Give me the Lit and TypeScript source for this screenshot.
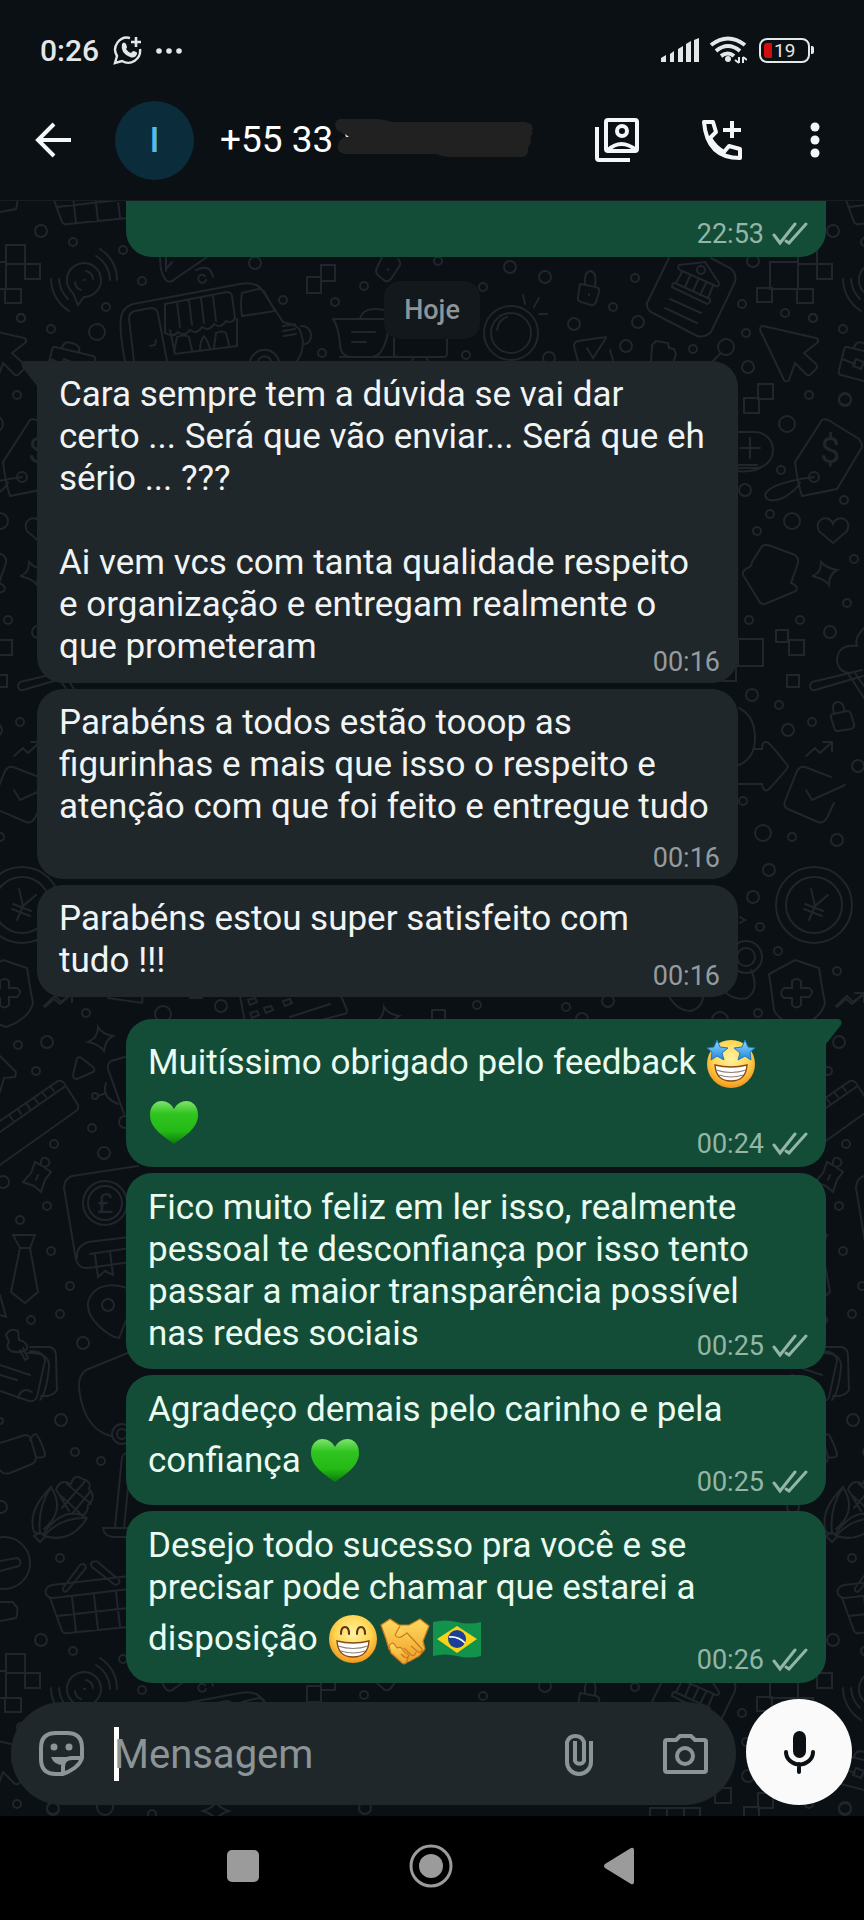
// Chat screen: phone status bar, conversation header,
// message list over a doodle wallpaper, composer and
// the system navigation keys.

import { html, svg, css, LitElement } from "lit";
import { customElement, property } from "lit/decorators.js";
import { classMap } from "lit/directives/class-map.js";

// The doodles repeat on this tile.
const TILE_WIDTH = 792;
const TILE_HEIGHT = 1409;

// [x, y, radius]
const BUBBLES = [
  [142, 281, 5], [106, 307, 5], [21, 318, 5], [51, 329, 5], [97, 332, 9],
  [255, 263, 7], [364, 286, 5], [335, 302, 5], [283, 300, 5], [322, 353, 5],
  [438, 261, 5], [483, 287, 5], [510, 267, 7], [545, 277, 7], [635, 278, 5],
  [613, 307, 5], [574, 324, 7], [638, 322, 7], [626, 346, 7], [693, 349, 5],
  [726, 347, 9], [746, 333, 5], [742, 304, 5], [785, 313, 5], [813, 318, 5],
  [753, 261, 7], [748, 367, 7], [466, 355, 5], [549, 358, 7], [787, 424, 9],
  [781, 470, 5], [745, 490, 7], [770, 514, 5], [757, 531, 5], [792, 521, 9],
  [844, 500, 5], [854, 559, 5], [847, 603, 5], [845, 399, 7], [809, 395, 5],
  [749, 620, 5], [800, 620, 5], [830, 632, 7], [752, 695, 7], [779, 705, 5],
  [788, 730, 7], [812, 722, 5], [858, 766, 7], [743, 801, 5], [763, 833, 9],
  [792, 837, 5], [837, 840, 7], [769, 870, 7], [753, 897, 7], [760, 927, 5],
  [778, 951, 5], [837, 971, 5], [758, 1013, 5], [720, 1020, 9],
  [86, 1013, 5], [163, 1014, 9], [221, 1006, 7], [18, 1045, 5], [47, 1042, 7],
  [36, 1071, 5], [92, 1128, 5], [54, 1144, 5], [104, 1153, 7], [3, 1182, 7],
  [47, 1206, 5], [20, 1220, 5], [51, 1251, 5], [70, 1286, 5], [60, 1314, 5],
  [31, 1320, 5], [83, 1343, 7], [95, 1096, 4], [125, 1122, 7], [477, 1005, 5],
  [566, 1007, 5], [608, 1001, 7], [582, 1019, 7], [61, 1420, 7], [75, 1452, 5],
  [101, 1461, 5], [0, 1421, 4], [1, 1507, 7], [60, 1558, 5], [41, 1640, 7],
  [73, 1651, 5], [123, 1659, 5], [53, 1809, 7], [105, 1807, 9], [152, 1814, 5],
  [365, 1808, 7],
];

const DOODLES = [
  // stacked squares
  "M798 245h19v19h-19zM770 262h28v27h-28zM817 264h15v15h-15zM757 288h15v14h-15zM797 289h16v14h-16z",
  "M321 265h14v16h-14zM307 277h14v16h-14zM758 384h15v15h-15zM744 398h15v15h-15z",
  "M738 639h25v27h-25zM776 630h12v12h-12zM789 640h15v15h-15zM787 675h12v12h-12zM722 666h14v15h-14z",
  "M432 1010h13v13h-13zM190 985h12v13h-12zM650 1808h50v30h-50zM667 1808v20M684 1808v20M715 1788h16v15h-16z",
  // speaker with sound waves
  "M78 305l-5-12a17 17 0 1 1 11 4zM84 280h1M86 271a9 9 0 0 1 7 8M75 282a9 9 0 0 0 6 8",
  "M96 256a28 28 0 0 1 14 24M100 249a36 36 0 0 1 17 31M59 279a30 30 0 0 0 9 20M51 279a38 38 0 0 0 18 32",
  // music note and cone
  "M160 257q0 18 7 24q4 2 8-2l32-22M166 257v14M172 262l-5 6M196 270q14-7 17 7M206 280a4 4 0 1 1-1-4",
  // food truck
  "M125 361q-6-30-4-44q2-10 12-13l107-20q16-3 22 6l21 32q14 3 17 8l3 11q0 12-6 20M134 361l-5-42q0-7 6-8l16-3q6 0 7 6l9 47",
  "M165 304l62-12q4 0 5 4l3 22q-3 6-9 3q-5 8-12 3q-5 8-12 3q-5 8-12 3q-5 7-12 2q-5 6-13 1zM177 302l3 25M189 300l3 25M201 298l3 25M213 296l3 25M170 330l5 24l62-8v-27",
  "M242 293l16-4q5 0 7 4l10 18l-33 5q-2-12 0-23M283 326l12-2M283 331l12-2M284 336l12-2M301 326q9 0 10 9q0 8-6 9M250 361a15 15 0 0 1 29 0M258 361a7 7 0 0 1 13 0M150 346l5-1l1-5",
  "M174 352l3-15q7-3 12 0l3 13M200 350q0-9 4-14q4 5 6 13M214 347l2-14q6-3 10 0l3 12",
  // jug and monitor
  "M333 319h56q0 22-9 34q-4 4-10 4h-18q-12 0-12-14q-2-18-7-24M352 332h23M352 342h14M360 318q4-12 24-8M394 322v33q1 2 4 2h46q3 0 3-4v-25M340 357h104M414 357l-4 8M426 357l4 8",
  // tag, padlocks
  "M382 257l-6 13q0 4 3 6l6 5q3 1 6-2l9-14q1-4-2-6M388 269v1M580 284l16 3q4 1 3 5l-3 10q-2 4-5 3l-10-3q-4-1-3-5zM585 284q-1-13 6-13q6 2 4 14M589 294v1",
  "M833 714l14-3q3 0 4 3l3 10q1 4-3 5l-13 2q-4 0-4-4l-3-9q-1-3 2-4zM834 713q-3-11 4-11q6 0 6 9",
  // mirror ring
  "M484 333a27 27 0 1 0 54 0a27 27 0 1 0-54 0zM491 333a20 20 0 1 0 40 0a20 20 0 1 0-40 0M497 330q2-11 10-13M534 307l5-9M525 304l-2-9M539 314h8",
  // check cards
  "M606 337l-28 4q-4 1-4 5l4 15M606 338l-13 20l-6-10M610 350l3 10M652 345l4-4l12 2l1 5l5 1l2 5l-3 9h-22zM720 354l-8 8",
  "M831 777l-26-10q-5-1-8 4l-12 30q-2 6 3 8l30 13q5 2 9-4l7-15M806 790l6 10l33-15",
  // bank letter
  "M669 258l-22 45q-1 7 6 10l44 23q8 2 14-4l24-50q2-9-5-14l-19-10M679 265l26-3l14 21q0 4-3 3l-36-16q-3-2-1-5zM675 283q-3 0-3 4l35 17q4-1 3-5zM682 272l-6 11M690 276l-5 11M698 280l-5 11M706 283l-6 12M713 286l-5 12M697 270a4 4 0 1 0 8 0a4 4 0 1 0-8 0M670 299l31 14M665 308l32 15",
  // pointer
  "M763 326l53 12q4 2 1 5l-13 10l12 11q2 3 0 5l-6 6q-2 1-4-1l-11-11l-6 17q-3 3-5 0l-24-50q0-4 3-4z",
  // briefcase
  "M847 347l38 9q3 1 2 5l-6 21q-1 3-5 2l-35-9q-3-1-2-5l5-20q1-4 3-3zM842 359l13 5M866 366l16 4M856 359l8 3l-3 7l-8-3zM854 348q2-8 10-5q9 2 7 9",
  // pills, price tag
  "M735 432h20a18 18 0 0 1 0 36h-20M735 465h22M735 471q20 2 28-5M750 438v20M740 448h20",
  "M822 420q4-2 8 1l29 18q3 3 3 8l-25 42l-35 7q-5-15-7-34zM809 477a5 5 0 1 0 10 0a5 5 0 1 0-10 0M814 477q-45 6-49 18q2 9 18 3q14-8 17-16",
  // heart, house, sparkles
  "M833 543l-14-12c-6-12 10-18 14-7c4-11 20-5 14 7zM762 546q4-2 9 0l24 9q4 3 3 8l-7 20q8 3 5 8l-31 13q-4 1-6-3l-16-26q-1-5 5-7q4-2 4-6z",
  "M821 562q5 6 16 8q-8 4-8 15q-4-6-17-9q9-2 9-14zM98 1027q4 7 15 9q-8 4-9 15q-5-7-16-9q10-4 10-15zM384 1007q4 7 15 9q-8 4-9 15q-5-7-16-9q10-4 10-15zM216 1802q3 6 13 9q-10 3-13 9q-3-6-13-9q10-3 13-9z",
  // balloon, pen, arrows
  "M864 628q-10 10-7 18q-20-2-20 15q2 12 14 12M812 682l50-12M815 690l48-14M812 682q-4 4 0 8h3M849 675l17 26M855 673l18 26",
  "M806 756l9-8l5 5l12-11M823 742h9v9M837 1007l9-8l6 5l12-10M855 993h9v9M739 708q16 8 16 30q0 20-16 27M755 749h7q0-8 5-7q3 1 21 24q0 3-20 24q-5 2-6-6h-23",
  // coin
  "M776 905a38 38 0 1 0 76 0a38 38 0 1 0-76 0zM786 905a28 28 0 1 0 56 0a28 28 0 1 0-56 0zM811 889l4 17l13-11M815 906l-6 14M805 904l18 7M804 909l18 7",
  // shield
  "M795 960l24 8q3 20 6 35q-4 16-27 24q-20-7-24-17q-2-16-5-36zM792 981q5-4 9 0v7h8q6 4 0 9h-8v8q-5 5-9 0v-7h-8q-6-5 0-10h8z",
  "M730 957a16 16 0 1 0 32 0a16 16 0 1 0-32 0M737 957a9 9 0 1 0 18 0a9 9 0 1 0-18 0M751 970q9 20-4 28q-12 3-22-6M740 917l5 3l-5 3M669 996q8 15 22 15q12-4 12-15",
  // keyboard and cards
  "M240 996l5 26M341 996l6 14q0 4-3 4l-84 22M248 1000l7-2l2 4l-7 3zM264 1008l7-2l2 4l-7 3zM283 1001l7-2l2 4l-7 3zM250 1013l7-2l2 4l-7 3zM290 1017l40-13M108 998l34 5q1-4 0-8M44 1006l11-10l6 6l10-8",
  // play button, robot
  "M77 1058q3-2 6 1l10 8q3 3 0 5l-16 7q-4 0-4-4zM125 1057l-14 4q-4 3-3 8l16 45M98 1096l8-3M106 1083q-5 14 12 21",
  // ruler
  "M0 1121l58-40q4-1 6 2l14 22q1 4-2 6L0 1165M0 1132l64-45M50 1086l4 5M42 1092l4 5M34 1098l4 5M26 1103l4 6M18 1109l3 5M9 1115l4 5M0 1056l16 16l-1 5l-11 1l-4 14",
  // thumb tack
  "M35 1162l6 3l10 7l-6 8l-4 12l-7-6l-11-4l8-9zM41 1163q0-8 7-4q4 6-3 8M38 1175l-2 5",
  // book
  "M138 1166l-66 10q-8 3-8 12l12 72q3 9 12 8l50-7M138 1236l-50 6q-12 4-11 16M83 1203a22 22 0 1 0 44 0a22 22 0 1 0-44 0M88 1203a17 17 0 1 0 34 0a17 17 0 1 0-34 0M90 1254l40-6M95 1255l3 22l7-6l8 4l-3-23",
  // tie, map pin, notes
  "M13 1235h22l-5 13h-10zM20 1248l-9 44l14 11l13-11l-8-44M134 1294c-8-12-42-14-46 9c-2 17 22 34 31 35l8-20M102 1305a6 6 0 1 0 12 0a6 6 0 1 0-12 0M0 1295l6 22l-6-2",
  "M6 1335q4-8 12-4l1 9q9 2 8 9q-6 5-16 2q-6-4-2-9zM20 1350l5 10l3-2l-5-10M30 1347h20q6 2 6 9l1 34q-4 7-16 6M30 1351q14 0 15 10l-8 36q-2 5-8 4l-29-10M18 1398q4-12 14-6M0 1365l30 10M0 1375l17 5M28 1353q22-1 21 14q-2 24-9 33",
  // stroller
  "M140 1348l-54 22q-8 6-7 18q4 36 26 46l6 2M112 1434a10 10 0 1 0 20 0a10 10 0 1 0-20 0M117 1434a5 5 0 1 0 10 0a5 5 0 1 0-10 0",
  // video camera
  "M0 1443l25-8q5 0 6 5l5 17q0 5-4 7l-22 9q-7 2-10-3M30 1440q4-8 7-5q5 8 8 19q0 5-9 3",
  // corn
  "M51 1487q-24 24-17 45l5 2M51 1487q-14 22-11 46M51 1487q15 24-7 42M87 1518q-22-14-43 15M87 1518q-16 26-43 18M87 1518q-26-1-42 17M40 1532l5 5l-5 5l-6-6zM56 1490q4-12 15-6q3-11 12-5q9 3 6 10q8 8-1 16q0 8-6 11M60 1495l24 22M67 1484l24 20M62 1508l24-28M72 1514l18-22M57 1491l12 20",
  // broom
  "M138 1528h-35q1 8 10 9h25M115 1527l7-70q3-6 8-2M124 1528l6-60",
  // no-entry, basket, folder
  "M-22 1563a26 26 0 1 0 52 0a26 26 0 1 0-52 0M0 1561l17-3q6 3 2 8l-19 5M0 1602l13 0q2 4 4 5q1 6-1 11l-16 3",
  "M138 1575l-86 10q-8 2-6 9q2 4 7 4l85-10M50 1598l12 33q2 3 6 2l70-7M72 1597l4 35M94 1595l4 35M116 1592l4 35M57 1616l80-9M63 1588l17-23q5-3 6 3l-19 23q-5 2-4-3zM92 1562q5-2 7 1l20 17q2 4-4 5l-23-18q-2-3 0-5",
];

// Doodle drawings laid out in a repeating grid behind the messages.
const wallpaper = svg`
  <svg class="wallpaper" aria-hidden="true">
    <defs>
      <g id="doodles">
        ${DOODLES.map((d) => svg`<path d=${d} />`)}
        ${BUBBLES.map(([x, y, r]) => svg`<circle cx=${x} cy=${y} r=${r - 1} />`)}
        <text x="820" y="463">$</text>
        <text class="small" x="97" y="1213">£</text>
      </g>
    </defs>
    <g transform="translate(0 -201)">
      ${[-1, 0, 1, 2].map((column) =>
        [-1, 0, 1].map(
          (row) =>
            svg`<use href="#doodles" x=${column * TILE_WIDTH} y=${row * TILE_HEIGHT} />`,
        ),
      )}
    </g>
  </svg>
`;

const ticks = html`
  <svg class="ticks" viewBox="0 0 36 24" role="img" aria-label="Entregue">
    <path d="M2 13l6 8L23 2M14 19l3 2L34 2" />
  </svg>
`;

const faceGradient = svg`
  <radialGradient id="face" cx="50%" cy="38%" r="62%">
    <stop offset="0" stop-color="#fff3a0" />
    <stop offset=".6" stop-color="#ffd552" />
    <stop offset="1" stop-color="#f2951c" />
  </radialGradient>
`;

const grin = svg`
  <path d="M10 32q16 4 32 0q-1 16-16 16T10 32z" fill="#fff" stroke="#8a4a12" stroke-width="1.4" />
  <path d="M11 37q15 5 30 0M14 42q12 4 24 0" fill="none" stroke="#8b7f76" stroke-width="1.2" />
`;

// The emoji templates start and end on their tag so that
// no space is rendered between neighbours.
const starEyes = html`<svg class="emoji" viewBox="0 0 52 60" role="img" aria-label="🤩">
    <defs>
      ${faceGradient}
      <linearGradient id="star" x2="0" y2="1">
        <stop offset="0" stop-color="#8fdcff" />
        <stop offset="1" stop-color="#1f86e0" />
      </linearGradient>
    </defs>
    <circle cx="26" cy="31" r="24" fill="url(#face)" />
    ${grin}
    <g fill="url(#star)" stroke="#2374bd" stroke-width="1" stroke-linejoin="round">
      <path d="M12 7l3 7l8 1l-6 5l2 7l-7-4l-6 4l1-8l-5-4l7-1z" />
      <path d="M40 7l-3 7l-8 1l6 5l-2 7l7-4l6 4l-1-8l5-4l-7-1z" />
    </g>
  </svg>`;

const greenHeart = html`<svg class="emoji" viewBox="0 0 52 60" role="img" aria-label="💚">
    <defs>
      <linearGradient id="leaf" x2="0" y2="1">
        <stop offset="0" stop-color="#7fe36c" />
        <stop offset=".3" stop-color="#2fc41f" />
        <stop offset=".7" stop-color="#24b915" />
        <stop offset="1" stop-color="#0b7a0c" />
      </linearGradient>
    </defs>
    <path
      fill="url(#leaf)"
      d="M26 51C17 44 2 36 2 22C2 5 20 4 26 16C32 4 50 5 50 22C50 36 35 44 26 51z"
    />
  </svg>`;

const grinning = html`<svg class="emoji" viewBox="0 0 52 60" role="img" aria-label="😁">
    <defs>${faceGradient}</defs>
    <circle cx="26" cy="30" r="24" fill="url(#face)" />
    ${grin}
    <path
      d="M14 25q0-7 4-7t4 7M30 25q0-7 4-7t4 7"
      fill="none"
      stroke="#5b3410"
      stroke-width="2"
      stroke-linecap="round"
    />
  </svg>`;

const handshake = html`<svg class="emoji" viewBox="0 0 52 60" role="img" aria-label="🤝">
    <defs>
      <linearGradient id="skin" x2="0" y2="1">
        <stop offset="0" stop-color="#ffd95e" />
        <stop offset="1" stop-color="#f0a02c" />
      </linearGradient>
    </defs>
    <g fill="url(#skin)" stroke="#c87a1c" stroke-width="1.2" stroke-linejoin="round">
      <path d="M2 16l9-6l9 6l10 0l11-6l9 7l-6 15l2 8l-6 7l-9 5l-5 2l-16-14l-3-10z" />
      <path d="M10 37q3-5 6-1l2 3q4-2 6 2l2 3q4 0 3 5l-2 5q-3 2-5-1l-10-9z" />
      <path d="M21 17l-5 9q3 5 9 0l3-2l15 16q0 4-4 3l-7-6m5 6q-1 5-5 3l-7-7m5 7q-1 4-5 2l-3-3" />
    </g>
  </svg>`;

const brazil = html`<svg class="emoji" viewBox="0 0 52 60" role="img" aria-label="🇧🇷">
    <path d="M2 13q12-3 24 0t24 0v34q-12 3-24 0t-24 0z" fill="#12924a" />
    <path d="M26 17l20 13l-20 14l-20-14z" fill="#f7d417" />
    <circle cx="26" cy="30" r="9" fill="#1b3f94" />
    <path d="M18 28q9-1 16 6" fill="none" stroke="#fff" stroke-width="1.6" />
  </svg>`;

const MESSAGES = [
  {
    time: "00:16",
    tail: true,
    body: html`Cara sempre tem a dúvida se vai dar<br />certo ... Será que vão
      enviar... Será que eh<br />sério ... ???<br /><br />Ai vem vcs com tanta
      qualidade respeito<br />e organização e entregam realmente o<br />que
      prometeram`,
  },
  {
    time: "00:16",
    stacked: true,
    body: html`Parabéns a todos estão tooop as<br />figurinhas e mais que isso o
      respeito e<br />atenção com que foi feito e entregue tudo`,
  },
  {
    time: "00:16",
    body: html`Parabéns estou super satisfeito com<br />tudo !!!`,
  },
  {
    time: "00:24",
    own: true,
    tail: true,
    body: html`Muitíssimo obrigado pelo feedback ${starEyes}<br />${greenHeart}`,
  },
  {
    time: "00:25",
    own: true,
    body: html`Fico muito feliz em ler isso, realmente<br />pessoal te
      desconfiança por isso tento<br />passar a maior transparência possível<br />nas
      redes sociais`,
  },
  {
    time: "00:25",
    own: true,
    body: html`Agradeço demais pelo carinho e pela<br />confiança ${greenHeart}`,
  },
  {
    time: "00:26",
    own: true,
    body: html`Desejo todo sucesso pra você e se<br />precisar pode chamar que
      estarei a<br />disposição ${grinning}${handshake}${brazil}`,
  },
];

@customElement("chat-message")
class ChatMessage extends LitElement {
  @property({ attribute: false }) body;
  @property() time = "";
  @property({ type: Boolean, reflect: true }) own = false;
  @property({ type: Boolean }) tail = false;
  @property({ type: Boolean }) stacked = false;

  static styles = css`
    :host {
      display: block;
      margin: 0 126px 0 37px;
    }
    :host([own]) {
      margin: 0 38px 0 126px;
    }
    .bubble {
      position: relative;
      display: grid;
      padding: 0 18px 0 22px;
      border-radius: 26px;
      background: #20272a;
      color: #f1f4f5;
    }
    .own {
      background: #144d37;
      color: #eafbf1;
    }
    .tail {
      border-top-left-radius: 0;
    }
    .own.tail {
      border-top-left-radius: 26px;
      border-top-right-radius: 0;
    }
    .corner {
      position: absolute;
      top: 0;
      right: 100%;
      width: 16px;
      height: 25px;
      fill: #20272a;
    }
    .own .corner {
      right: auto;
      left: 100%;
      fill: #144d37;
      transform: scaleX(-1);
    }
    .text {
      grid-area: 1 / 1;
      margin: 0;
      padding: 13px 0 15px;
      font-size: 35px;
      line-height: 42px;
    }
    .own .text {
      padding: 14px 0;
    }
    .clipped {
      border-radius: 0 0 26px 26px;
    }
    .clipped .text {
      padding: 0;
      min-height: 56px;
    }
    .meta {
      grid-area: 1 / 1;
      place-self: end;
      display: flex;
      align-items: center;
      gap: 8px;
      margin-bottom: 6px;
      font-size: 27px;
      line-height: 30px;
      color: #959c9f;
    }
    .own .meta {
      margin-bottom: 8px;
      color: #93b6a6;
    }
    .stacked .meta {
      grid-area: 2 / 1;
    }
    .ticks {
      width: 36px;
      height: 24px;
      fill: none;
      stroke: currentColor;
      stroke-width: 3;
      stroke-linecap: round;
    }
    .emoji {
      width: 52px;
      height: 60px;
      vertical-align: -19px;
    }
  `;

  render() {
    const classes = {
      bubble: true,
      own: this.own,
      tail: this.tail,
      stacked: this.stacked,
      clipped: !this.body,
    };
    return html`
      <div class=${classMap(classes)}>
        ${this.tail
          ? html`<svg class="corner" viewBox="0 0 16 25" aria-hidden="true">
              <path d="M16 0H4Q-1 1 1 6L16 25z" />
            </svg>`
          : ""}
        <p class="text">${this.body}</p>
        <span class="meta"><time>${this.time}</time>${this.own ? ticks : ""}</span>
      </div>
    `;
  }
}

@customElement("app-root")
class AppRoot extends LitElement {
  static styles = css`
    :host {
      display: flex;
      flex-direction: column;
      min-height: 100vh;
      background: #0a1014;
      color: #f4f6f7;
      font-family: Roboto, "Liberation Sans", sans-serif;
    }
    button {
      display: grid;
      place-items: center;
      padding: 0;
      border: 0;
      background: none;
      color: inherit;
      flex: none;
    }
    svg {
      display: block;
      fill: none;
      stroke: currentColor;
    }
    .solid {
      fill: currentColor;
      stroke: none;
    }
    .status {
      display: flex;
      align-items: center;
      height: 100px;
      padding: 0 50px 0 40px;
      color: #e4e7e8;
      font-size: 30px;
      font-weight: 500;
    }
    .status svg {
      flex: none;
    }
    .notices {
      margin: 0 auto 0 14px;
    }
    .signal {
      margin-right: 10px;
    }
    .wifi {
      margin-right: 12px;
    }
    .battery {
      display: flex;
      align-items: center;
      font-size: 19px;
      font-weight: 400;
    }
    .cell {
      box-sizing: border-box;
      display: flex;
      align-items: center;
      gap: 2px;
      width: 51px;
      height: 25px;
      padding: 0 3px;
      border: 2px solid;
      border-radius: 8px;
    }
    .charge {
      width: 8px;
      height: 15px;
      border-radius: 3px 1px 1px 3px;
      background: #d10d0d;
    }
    .nub {
      width: 3px;
      height: 8px;
      margin-left: 1px;
      border-radius: 0 2px 2px 0;
      background: currentColor;
    }
    header {
      display: flex;
      align-items: center;
      height: 80px;
      padding: 0 40px 20px 32px;
      border-bottom: 1px solid #171d21;
    }
    .avatar {
      display: grid;
      place-items: center;
      width: 79px;
      height: 79px;
      margin: 0 26px 0 39px;
      border-radius: 50%;
      background: #0a2c3b;
      color: #5bb9e8;
      font-size: 35px;
      font-weight: 500;
    }
    h1 {
      margin: 0;
      font-size: 37px;
      line-height: 42px;
      font-weight: 400;
      color: #fff;
    }
    .scribble {
      flex: none;
      margin-right: auto;
      fill: #212121;
      stroke: none;
    }
    .tools {
      display: flex;
      align-items: center;
    }
    .call {
      margin: 0 62px 0 60px;
    }
    main {
      position: relative;
      flex: 1;
      display: flex;
      flex-direction: column;
      overflow: hidden;
    }
    .wallpaper {
      position: absolute;
      inset: 0;
      width: 100%;
      height: 100%;
      stroke: #20262b;
      stroke-width: 2;
      stroke-linecap: round;
    }
    .wallpaper text {
      fill: #20262b;
      stroke: none;
      font-size: 36px;
    }
    .wallpaper .small {
      font-size: 28px;
    }
    .day {
      position: relative;
      align-self: center;
      margin: 24px 0 22px;
      padding: 0 20px;
      border-radius: 16px;
      background: #12181c;
      color: #8d9599;
      font-size: 27px;
      font-weight: 500;
      line-height: 58px;
    }
    .list {
      position: relative;
      display: flex;
      flex-direction: column;
      gap: 6px;
      margin: 0;
      padding: 0;
      list-style: none;
    }
    .reply {
      margin-top: 16px;
    }
    form {
      position: relative;
      display: flex;
      align-items: flex-end;
      gap: 10px;
      margin-top: auto;
      padding: 16px 12px 11px 11px;
    }
    .field {
      flex: 1;
      display: flex;
      align-items: center;
      height: 103px;
      padding: 0 28px;
      border-radius: 52px;
      background: #20272a;
      color: #8b9497;
    }
    .entry {
      flex: 1;
      display: grid;
      align-items: center;
      min-width: 0;
      margin-left: 30px;
    }
    .entry > * {
      grid-area: 1 / 1;
    }
    .caret {
      width: 5px;
      height: 54px;
      background: #fff;
    }
    input {
      position: relative;
      width: 100%;
      padding: 2px 0 0;
      border: 0;
      outline: 0;
      background: none;
      color: #f4f6f7;
      font: 40px / 54px Roboto, "Liberation Sans", sans-serif;
    }
    input::placeholder {
      color: #8b9497;
      opacity: 1;
    }
    .camera {
      margin-left: 70px;
    }
    .mic {
      width: 106px;
      height: 106px;
      border-radius: 50%;
      background: #fafafa;
      color: #0a1014;
    }
    nav {
      display: flex;
      align-items: center;
      justify-content: center;
      gap: 144px;
      height: 104px;
      padding: 0 2px 5px 0;
      box-sizing: border-box;
      background: #000;
      color: #9b9b9b;
    }
    nav button {
      width: 44px;
      height: 44px;
    }
  `;

  renderStatus() {
    return html`
      <div class="status">
        <time>0:26</time>
        <svg class="notices" width="70" height="30" viewBox="0 0 70 30" aria-hidden="true">
          <path
            d="M17 3A12 12 0 0 0 4 21L2 28l7-2A12 12 0 0 0 27 14"
            stroke-width="2.4"
          />
          <path d="M23 2v10M18 7h10" stroke-width="2.6" />
          <path
            class="solid"
            d="M9 9q2-3 4 0l1 3q0 1-1 2q2 3 5 4l2-2q5 1 4 3q-2 5-7 3Q7 18 9 9z"
          />
          <g class="solid">
            <circle cx="46" cy="16" r="2.8" />
            <circle cx="56" cy="16" r="2.8" />
            <circle cx="66" cy="16" r="2.8" />
          </g>
        </svg>
        <svg class="signal solid" width="38" height="26" viewBox="0 0 38 26" aria-hidden="true">
          <path
            d="M0 21l5-3v7H0zM9 17l4-3v11H9zM17 12l5-3v16h-5zM25 7l5-3v21h-5zM33 3l5-2v24h-5z"
          />
        </svg>
        <svg class="wifi" width="38" height="28" viewBox="0 0 38 28" aria-hidden="true">
          <path
            d="M2 9Q19-4 36 9M7 15Q19 5 31 15M12 20Q19 15 25 20"
            stroke-width="4"
          />
          <circle class="solid" cx="19" cy="23" r="3" />
          <path d="M30 21v6M26 24l4 3M34 27v-6M38 24l-4-3" stroke-width="2" />
        </svg>
        <div class="battery">
          <div class="cell"><span class="charge"></span>19</div>
          <span class="nub"></span>
        </div>
      </div>
    `;
  }

  renderHeader() {
    return html`
      <header>
        <button aria-label="Voltar">
          <svg width="44" height="44" viewBox="0 0 44 44" stroke-width="4">
            <path d="M39 22H7M22 6L6 22l16 16" />
          </svg>
        </button>
        <div class="avatar">I</div>
        <h1>+55 33</h1>
        <svg class="scribble" width="200" height="42" viewBox="0 2 200 42" aria-hidden="true">
          <path
            d="M7 2H44Q54 3 58 5H192Q202 7 199 14Q201 17 197 20Q200 26 195 30Q196 41 186 40H120Q108 40 104 37H12Q3 35 5 28Q7 21 14 19L4 13Q-1 4 7 2z"
          />
          <path d="M12 17l4 3l-3 0z" fill="#e8e8e8" />
        </svg>
        <div class="tools">
          <button aria-label="Ver contato">
            <svg width="46" height="46" viewBox="0 0 46 46" stroke-width="4">
              <rect x="12" y="3" width="31" height="31" rx="2" />
              <path d="M3 10v31q0 2 2 2h31" />
              <circle cx="28" cy="14" r="5" />
              <path d="M14 33q13-12 28 0" />
            </svg>
          </button>
          <button class="call" aria-label="Ligar">
            <svg width="44" height="44" viewBox="0 0 44 44" stroke-width="4">
              <path
                d="M4 4h9l3 10l-6 6q5 9 14 14l5-6l11 3v9Q7 40 4 4z"
                stroke-linejoin="round"
              />
              <path d="M32 3v17M23 12h18" />
            </svg>
          </button>
          <button aria-label="Mais opções">
            <svg class="solid" width="18" height="40" viewBox="0 0 18 40">
              <circle cx="9" cy="7" r="4.5" />
              <circle cx="9" cy="20" r="4.5" />
              <circle cx="9" cy="33" r="4.5" />
            </svg>
          </button>
        </div>
      </header>
    `;
  }

  renderComposer() {
    return html`
      <form @submit=${(event) => event.preventDefault()}>
        <div class="field">
          <button type="button" aria-label="Figurinhas">
            <svg width="45" height="45" viewBox="0 0 45 45" stroke-width="4">
              <path
                d="M24 43H17Q2 43 2 28V17Q2 2 17 2h11Q43 2 43 17v10Q40 37 24 43V36q0-9 9-9h10"
                stroke-linejoin="round"
              />
              <g class="solid">
                <circle cx="15" cy="16" r="3.5" />
                <circle cx="30" cy="16" r="3.5" />
                <path d="M12 26h18l-6 8q-9 0-12-8z" />
              </g>
            </svg>
          </button>
          <div class="entry">
            <span class="caret"></span>
            <input type="text" placeholder="Mensagem" aria-label="Mensagem" />
          </div>
          <button type="button" aria-label="Anexar">
            <svg width="28" height="45" viewBox="0 0 28 45" stroke-width="4">
              <path
                d="M26 10v21a12 12 0 0 1-24 0V11a9 9 0 0 1 17 0v19a5 5 0 0 1-9 0V10"
              />
            </svg>
          </button>
          <button type="button" class="camera" aria-label="Câmera">
            <svg width="45" height="40" viewBox="0 0 45 40" stroke-width="4">
              <path
                d="M4 6h9l4-4h11l4 4h9q2 0 2 2v28q0 2-2 2H4q-2 0-2-2V8q0-2 2-2z"
              />
              <circle cx="22" cy="22" r="8" />
            </svg>
          </button>
        </div>
        <button type="button" class="mic" aria-label="Gravar áudio">
          <svg width="32" height="44" viewBox="0 0 32 44" stroke-width="4">
            <rect class="solid" x="10" y="1" width="13" height="27" rx="7" />
            <path d="M3 22a13 12 0 0 0 27 0M16 34v8" stroke-linecap="round" />
          </svg>
        </button>
      </form>
    `;
  }

  renderNav() {
    return html`
      <nav>
        <button aria-label="Recentes">
          <svg class="solid" width="32" height="32" viewBox="0 0 32 32">
            <rect width="32" height="32" rx="5" />
          </svg>
        </button>
        <button aria-label="Início">
          <svg width="44" height="44" viewBox="0 0 44 44" stroke-width="3">
            <circle cx="22" cy="22" r="20" />
            <circle class="solid" cx="22" cy="22" r="12" />
          </svg>
        </button>
        <button aria-label="Retornar">
          <svg class="solid" width="30" height="38" viewBox="0 0 30 38">
            <path d="M1 17L27 1q3-1 3 2v32q0 3-3 2L1 21q-2-2 0-4z" />
          </svg>
        </button>
      </nav>
    `;
  }

  render() {
    const firstReply = MESSAGES.findIndex((message) => message.own);
    return html`
      ${this.renderStatus()} ${this.renderHeader()}
      <main>
        ${wallpaper}
        <chat-message own time="22:53"></chat-message>
        <div class="day">Hoje</div>
        <ul class="list">
          ${MESSAGES.map(
            (message, index) => html`
              <li class=${classMap({ reply: index === firstReply })}>
                <chat-message
                  .body=${message.body}
                  .time=${message.time}
                  .own=${message.own ?? false}
                  .tail=${message.tail ?? false}
                  .stacked=${message.stacked ?? false}
                ></chat-message>
              </li>
            `,
          )}
        </ul>
        ${this.renderComposer()}
      </main>
      ${this.renderNav()}
    `;
  }
}

export default AppRoot;
